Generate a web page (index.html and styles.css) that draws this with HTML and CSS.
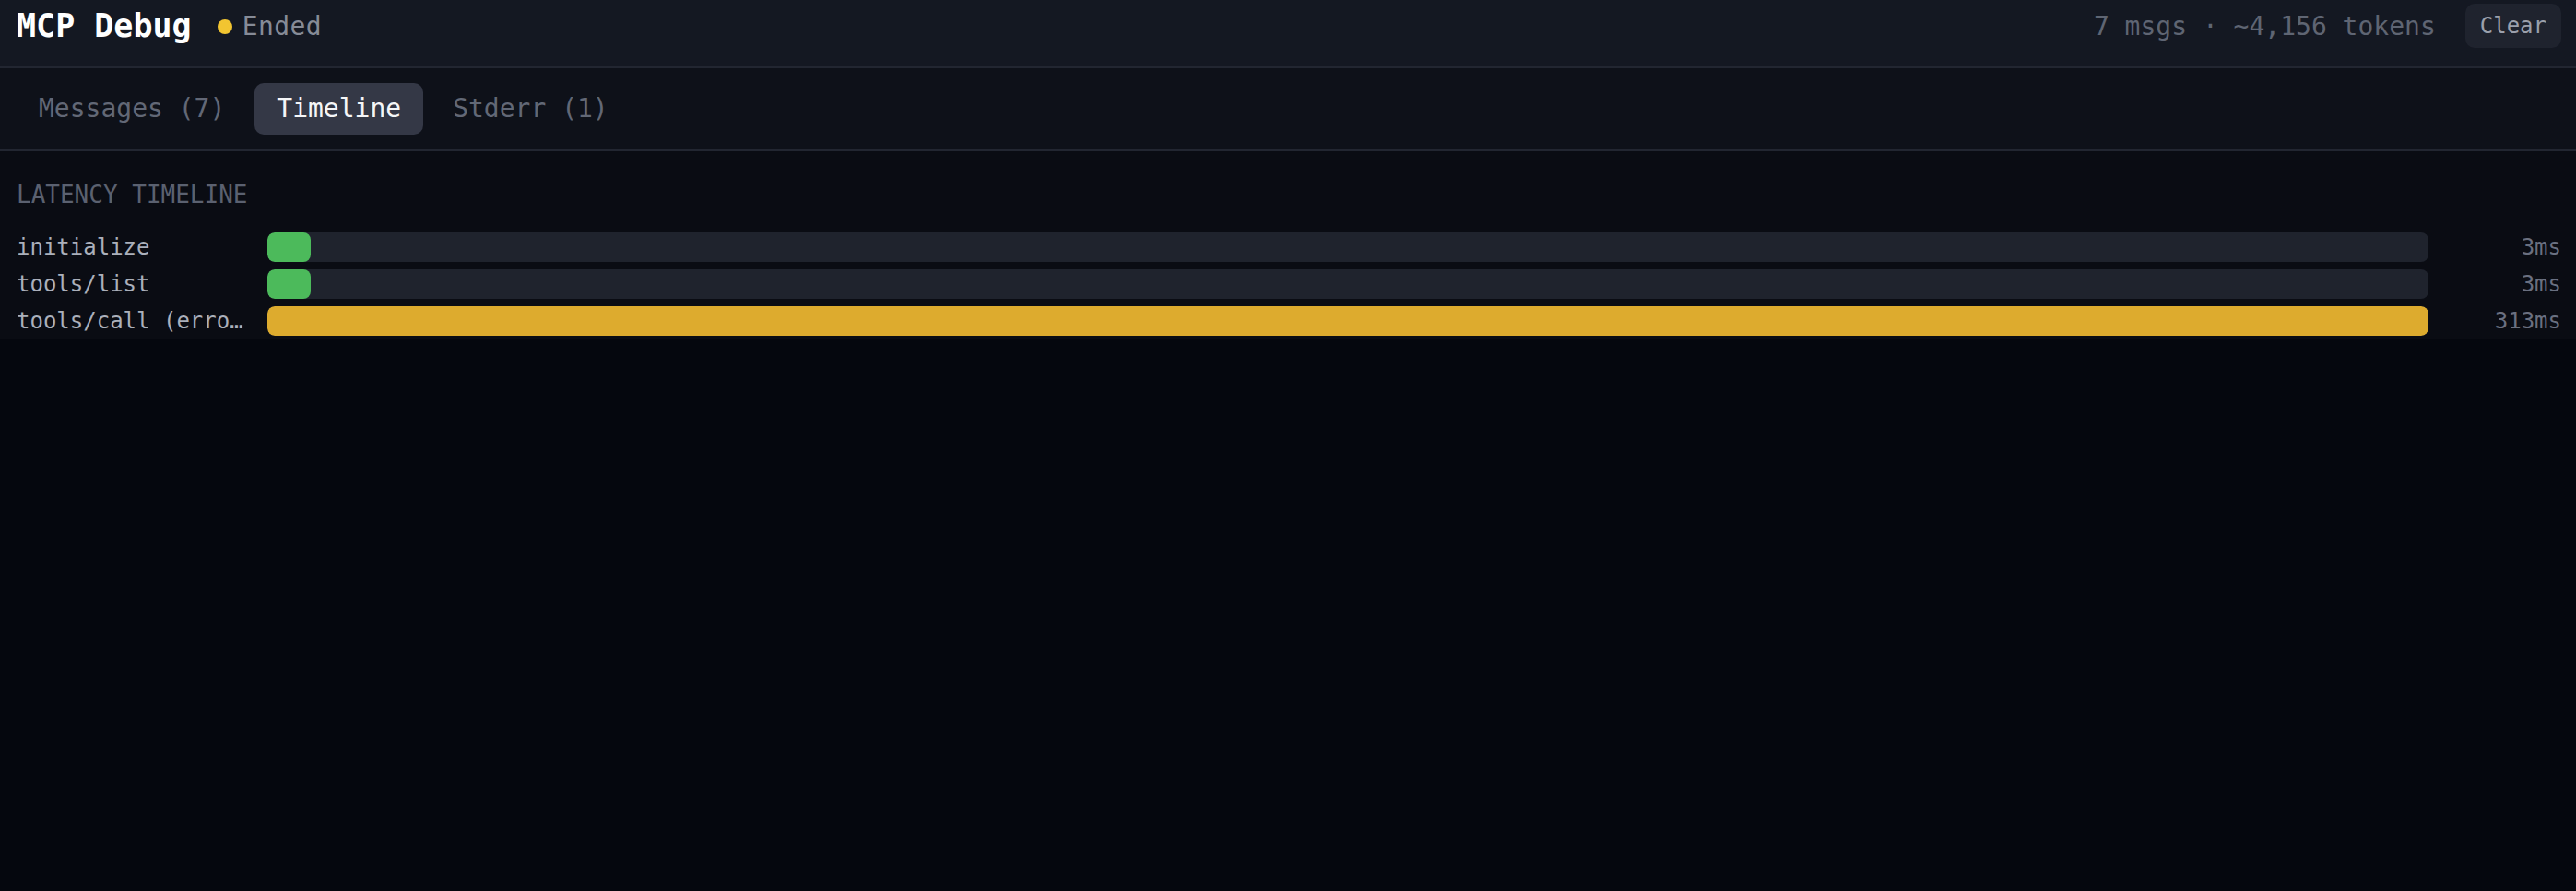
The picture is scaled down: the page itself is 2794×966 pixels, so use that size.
FILE: index.html
```html
<!DOCTYPE html>
<html lang="en">
<head>
<meta charset="utf-8">
<title>MCP Debug</title>
<link rel="stylesheet" href="styles.css">
</head>
<body>
  <header class="topbar">
    <h1 class="title">MCP Debug</h1>
    <div class="status">
      <span class="status-dot"></span>
      <span class="status-text">Ended</span>
    </div>
    <div class="spacer"></div>
    <span class="meta">7 msgs · ~4,156 tokens</span>
    <button class="clear-btn">Clear</button>
  </header>

  <nav class="tabbar">
    <button class="tab">Messages (7)</button>
    <button class="tab tab-active">Timeline</button>
    <button class="tab">Stderr (1)</button>
  </nav>

  <section class="timeline">
    <h2 class="timeline-heading">Latency Timeline</h2>
    <div class="rows">
      <div class="row">
        <span class="row-label">initialize</span>
        <div class="track"><div class="fill fill-ok" style="width: 2%"></div></div>
        <span class="row-value">3ms</span>
      </div>
      <div class="row">
        <span class="row-label">tools/list</span>
        <div class="track"><div class="fill fill-ok" style="width: 2%"></div></div>
        <span class="row-value">3ms</span>
      </div>
      <div class="row">
        <span class="row-label">tools/call (error)</span>
        <div class="track"><div class="fill fill-err" style="width: 100%"></div></div>
        <span class="row-value">313ms</span>
      </div>
    </div>
  </section>
</body>
</html>
```

FILE: styles.css
```css
* {
  box-sizing: border-box;
}

html, body {
  margin: 0;
  padding: 0;
  height: 100%;
}

body {
  background: #05070e;
  font-family: "DejaVu Sans Mono", "Liberation Mono", monospace;
  color: #aab0bb;
}

.topbar {
  display: flex;
  align-items: center;
  padding: 4px 16px 20px 18px;
  background: #141822;
  border-bottom: 2px solid #222631;
}

.title {
  margin: 0;
  font-size: 35px;
  font-weight: bold;
  color: #ffffff;
  line-height: 48px;
}

.status {
  display: flex;
  align-items: center;
  gap: 11px;
  margin-left: 28px;
}

.status-dot {
  width: 16px;
  height: 16px;
  border-radius: 50%;
  background: #f2c531;
  margin-top: 2px;
}

.status-text {
  font-size: 28px;
  letter-spacing: 0.4px;
  color: #868b97;
}

.spacer {
  flex: 1;
}

.meta {
  font-size: 28px;
  color: #5f6573;
}

.clear-btn {
  margin-left: 32px;
  font-family: inherit;
  font-size: 24px;
  line-height: 28px;
  padding: 10px 16px;
  border: none;
  border-radius: 10px;
  background: #1f232e;
  color: #9ba0ac;
}

.tabbar {
  display: flex;
  gap: 8px;
  padding: 16px 16px 16px 18px;
  background: #0e1119;
  border-bottom: 2px solid #222631;
}

.tab {
  font-family: inherit;
  font-size: 28px;
  line-height: 32px;
  padding: 12px 24px;
  border: none;
  border-radius: 10px;
  background: transparent;
  color: #626876;
}

.tab-active {
  background: #343846;
  color: #f5f6f8;
}

.timeline {
  padding: 32px 16px 3px 18px;
  background: #0a0c13;
}

.timeline-heading {
  margin: 0 0 26px 0;
  font-size: 26px;
  line-height: 30px;
  font-weight: normal;
  letter-spacing: 0;
  text-transform: uppercase;
  color: #5b6170;
}

.rows {
  display: flex;
  flex-direction: column;
  gap: 8px;
}

.row {
  display: flex;
  align-items: center;
  gap: 24px;
}

.row-label {
  width: 248px;
  flex: none;
  font-size: 24px;
  line-height: 28px;
  white-space: nowrap;
  overflow: hidden;
  text-overflow: ellipsis;
  color: #abb0bb;
}

.track {
  flex: 1;
  height: 32px;
  border-radius: 8px;
  background: #1f232d;
  overflow: hidden;
}

.fill {
  height: 100%;
  border-radius: 8px;
}

.fill-ok {
  background: #4cba5b;
}

.fill-err {
  background: #ddab2e;
}

.row-value {
  width: 120px;
  flex: none;
  text-align: right;
  font-size: 24px;
  line-height: 28px;
  color: #6a7080;
}
```
